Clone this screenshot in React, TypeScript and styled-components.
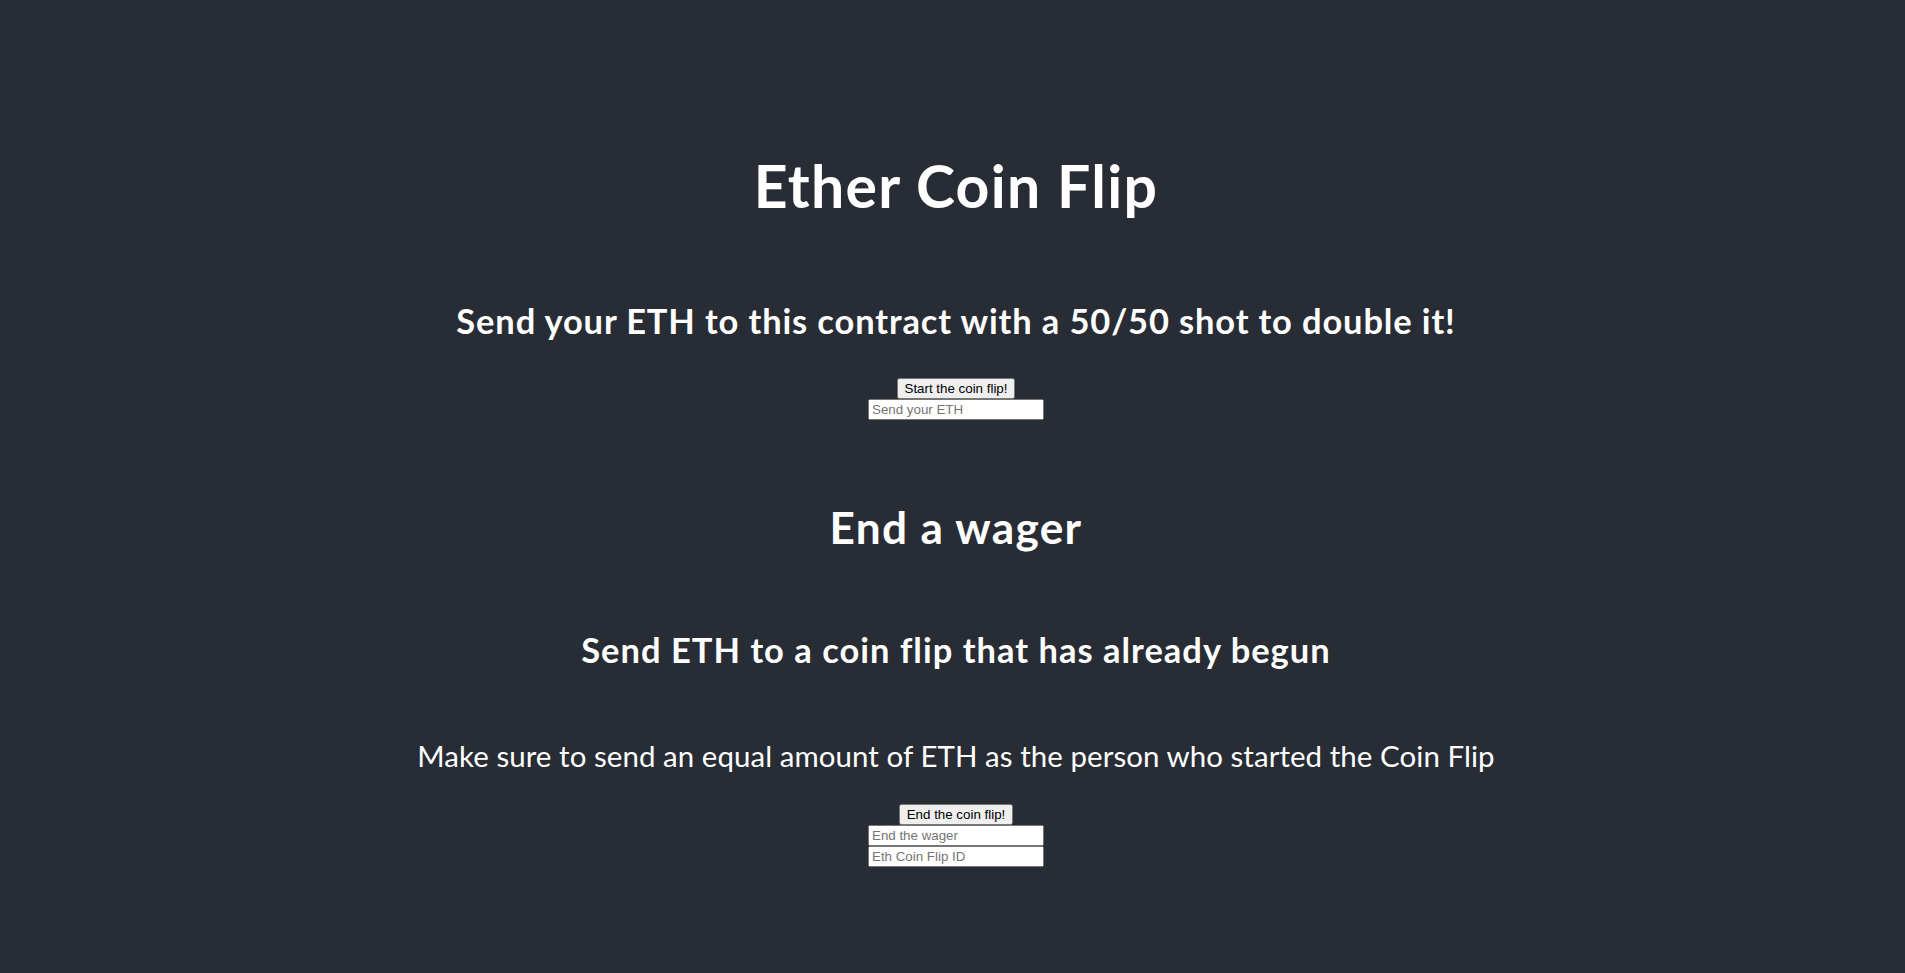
import React from "react";
import styled, { createGlobalStyle } from "styled-components";

const GlobalStyle = createGlobalStyle`
  html, body {
    margin: 0;
    padding: 0;
    background: #282c34;
  }
  body {
    font-family: Lato, "Open Sans", sans-serif;
  }
`;

const Header = styled.header`
  min-height: 100vh;
  box-sizing: border-box;
  padding-left: 7px;
  background-color: #282c34;
  display: flex;
  flex-direction: column;
  align-items: center;
  justify-content: center;
  font-size: calc(10px + 2vmin);
  color: #ffffff;
  text-align: center;
  font-family: Lato, "Open Sans", sans-serif;
`;

const Title = styled.h1`
  font-size: 2em;
  font-weight: 700;
  margin: 0.67em 0;
  padding-top: 0.054em;
  line-height: 1.276;
  letter-spacing: 1.3px;
`;

const SectionTitle = styled.h2`
  font-size: 1.5em;
  font-weight: 700;
  margin: 0.83em 0;
  padding-top: 0.054em;
  line-height: 1.276;
  letter-spacing: 1.3px;
`;

const Subtitle = styled.h3<{ $spacing: number }>`
  font-size: 1.17em;
  font-weight: 700;
  margin: 1em 0;
  padding-top: 0.054em;
  line-height: 1.276;
  letter-spacing: ${(p) => p.$spacing}px;
`;

const Note = styled.p`
  font-size: 1em;
  font-weight: 400;
  margin: 1em 0;
  padding-top: 0.054em;
  line-height: 1.276;
  letter-spacing: 0.06px;
`;

const Form = styled.div<{ $after?: number }>`
  display: flex;
  flex-direction: column;
  align-items: center;
  margin-bottom: ${(p) => p.$after ?? 0}px;
`;

const Button = styled.button`
  font-family: "Liberation Sans", Arial, sans-serif;
  font-size: 13.333px;
  height: 21px;
  box-sizing: border-box;
`;

const Field = styled.input`
  font-family: "Liberation Sans", Arial, sans-serif;
  font-size: 13.333px;
  width: 176px;
  height: 21px;
  box-sizing: border-box;
`;

export default function App() {
  return (
    <>
      <GlobalStyle />
      <Header>
        <Title>Ether Coin Flip</Title>
        <Subtitle $spacing={0.87}>
          Send your ETH to this contract with a 50/50 shot to double it!
        </Subtitle>
        <Form $after={40}>
          <Button type="button">Start the coin flip!</Button>
          <Field type="text" placeholder="Send your ETH" />
        </Form>
        <SectionTitle>End a wager</SectionTitle>
        <Subtitle $spacing={1.02}>
          Send ETH to a coin flip that has already begun
        </Subtitle>
        <Note>
          Make sure to send an equal amount of ETH as the person who started the Coin Flip
        </Note>
        <Form>
          <Button type="button">End the coin flip!</Button>
          <Field type="text" placeholder="End the wager" />
          <Field type="text" placeholder="Eth Coin Flip ID" />
        </Form>
      </Header>
    </>
  );
}
